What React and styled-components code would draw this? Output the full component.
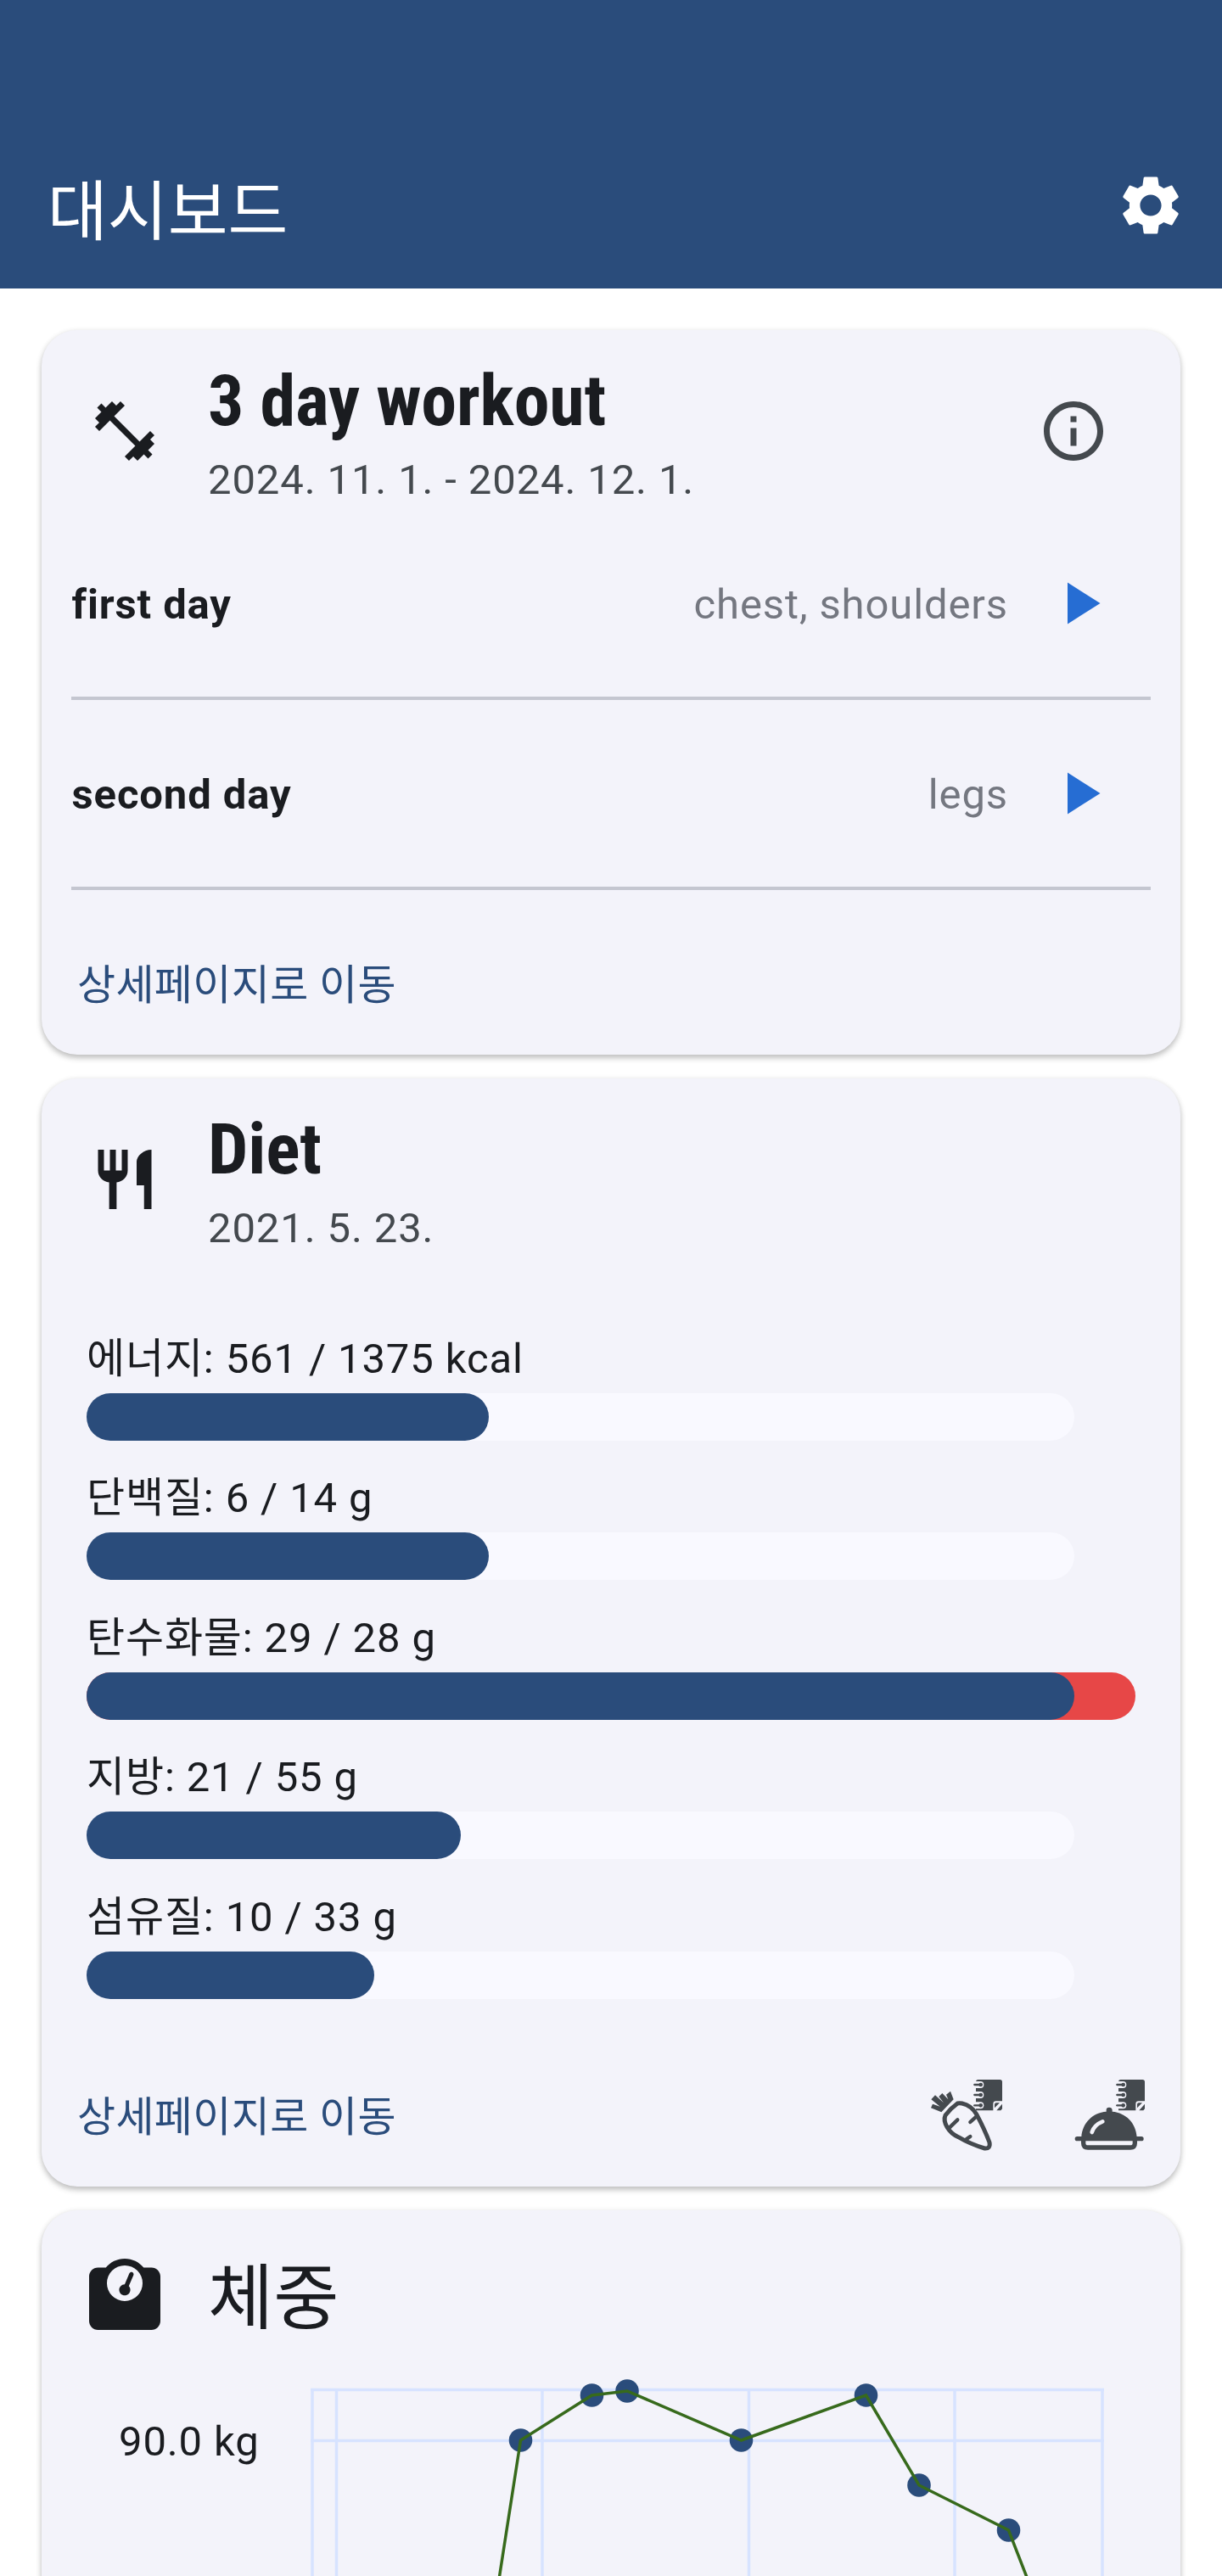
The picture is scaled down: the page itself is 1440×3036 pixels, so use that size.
import React from "react";
import styled, { createGlobalStyle } from "styled-components";
import { MdFitnessCenter, MdInfoOutline, MdPlayArrow, MdRestaurant, MdSettings } from "react-icons/md";
import { FaWeightScale } from "react-icons/fa6";

const color = {
  primary: "#2a4c7b",
  action: "#266dd3",
  surplus: "#e74747",
  card: "#f3f3fa",
  track: "#f9f9ff",
  text: "#1a1c20",
  muted: "#44494e",
  faint: "#747780",
  divider: "#c4c6d0",
  grid: "#d7e3ff",
  line: "#376a1c",
};

const GlobalStyle = createGlobalStyle`
  * { box-sizing: border-box; }
  body {
    margin: 0;
    background: #fff;
    color: ${color.text};
    font-family: Roboto, "Noto Sans CJK KR", sans-serif;
  }
`;

const Screen = styled.div`
  width: 1440px;
  height: 3036px;
  overflow: hidden;
  display: flex;
  flex-direction: column;
`;

const AppBar = styled.header`
  flex: none;
  height: 340px;
  padding: 144px 42px 0 56px;
  background: ${color.primary};
  color: #fff;
  display: flex;
  align-items: center;
  justify-content: space-between;
  svg { display: block; }
`;

const AppTitle = styled.h1`
  margin: 0;
  padding-top: 17px;
  font-size: 77px;
  line-height: 98px;
  font-weight: 400;
`;

const Content = styled.main`
  flex: none;
  padding: 49px 49px 0;
  display: flex;
  flex-direction: column;
  gap: 28px;
`;

const Card = styled.section`
  flex: none;
  height: ${(p) => p.$height}px;
  border-radius: 42px;
  background: ${color.card};
  box-shadow: 0 4px 7px rgba(0, 0, 0, 0.22), 0 1px 7px rgba(0, 0, 0, 0.08);
  display: flex;
  flex-direction: column;
`;

const CardHeader = styled.div`
  flex: none;
  height: ${(p) => p.$height || 238}px;
  padding: 0 84px 0 56px;
  display: flex;
  align-items: center;
  gap: 56px;
  svg { display: block; flex: none; }
`;

const HeaderText = styled.div`
  flex: 1;
  padding-top: 3px;
`;

const CardTitle = styled.h2`
  margin: 0;
  padding-top: ${(p) => (p.$bold ? 0 : 12)}px;
  font-size: 84px;
  line-height: 112px;
  font-weight: ${(p) => (p.$bold ? 700 : 400)};
  ${(p) => p.$bold && `font-family: "Roboto Condensed", Roboto, sans-serif; font-stretch: 75%; letter-spacing: -0.15px;`}
`;

const Subtitle = styled.div`
  font-size: 49px;
  line-height: 73px;
  letter-spacing: 0.875px;
  color: ${color.muted};
`;

const DayRow = styled.div`
  height: 168px;
  padding: 3px 77px 0 35.5px;
  display: flex;
  align-items: center;
  font-size: 49px;
  line-height: 70px;
  letter-spacing: 0.875px;
  svg { display: block; margin: -3px 0 0 42px; color: ${color.action}; }
`;

const DayName = styled.span`
  flex: 1;
  font-weight: 700;
`;

const Muscles = styled.span`
  color: ${color.faint};
`;

const Divider = styled.div`
  height: 56px;
  padding: 26px 35px;
  &::before {
    content: "";
    display: block;
    height: 4px;
    background: ${color.divider};
  }
`;

const Actions = styled.div`
  flex: none;
  height: 168px;
  margin-top: auto;
  padding-left: 42px;
  display: flex;
  align-items: center;
`;

const DetailLink = styled.span`
  flex: 1;
  padding-top: 6px;
  font-size: 49px;
  line-height: 70px;
  letter-spacing: 0.35px;
  color: ${color.primary};
`;

const IconButton = styled.span`
  width: 168px;
  display: flex;
  justify-content: center;
  color: ${color.muted};
  svg { display: block; }
`;

const Nutrients = styled.div`
  padding: 57.5px 53px 0;
`;

const Nutrient = styled.div`
  height: 164.6px;
`;

const NutrientLabel = styled.div`
  font-size: 49px;
  line-height: 70px;
  letter-spacing: 0.875px;
  margin-bottom: 5px;
`;

const Gauge = styled.div`
  display: grid;
  height: 56px;
`;

const Bar = styled.div`
  grid-area: 1 / 1;
  width: ${(p) => p.$width}px;
  border-radius: 28px;
  background: ${(p) => p.$fill};
`;

const WeightChart = styled.div`
  display: flex;
  padding: 12px 0 0 91px;
  svg { display: block; margin-left: 63px; overflow: visible; }
`;

const AxisLabel = styled.div`
  width: 163px;
  flex: none;
  padding-top: 28px;
  font-size: 49px;
  line-height: 70px;
  letter-spacing: 0.875px;
  text-align: right;
  white-space: nowrap;
`;

const Notebook = ({ x }) => (
  <g transform={`translate(${x} 93)`}>
    <path fill="currentColor" d="M17 0H94Q102 0 102 8V76H80Q70 76 70 86V109H9V8Q9 0 17 0Z" />
    {[18, 54, 91].map((y) => (
      <g key={y} strokeLinecap="round">
        <path d={`M7 ${y}H25`} stroke={color.card} strokeWidth="24" />
        <path d={`M4 ${y}H28`} stroke="currentColor" strokeWidth="7" />
        <circle cx="26" cy={y} r="7" fill="currentColor" />
      </g>
    ))}
    <path fill="currentColor" d="M75 100V88Q75 82 81 82H93ZM82 109L102 86V103L97 109Z" />
  </g>
);

const IngredientLogIcon = () => (
  <svg width="84" height="84" viewBox="111 93 252 252" fill="none">
    <Notebook x={261} />
    <path
      fill="currentColor"
      d="M148 208L111 193L117 179L143 188L112 163L126 148L156 175L139 153L151 141L172 163L165 146L180 134L191 163Z"
    />
    <path
      fill={color.card}
      stroke="currentColor"
      strokeWidth="15"
      strokeLinejoin="round"
      d="M205 177Q212 175 221 177Q255 185 272 215Q302 272 318 315Q322 338 301 336Q250 321 208 296C172 280 152 242 162 219Q180 195 205 177Z"
    />
    <path
      stroke="currentColor"
      strokeWidth="13"
      strokeLinecap="round"
      d="M174 265L205 235M250 243L272 223M236 304L250 294"
    />
  </svg>
);

const MealLogIcon = () => (
  <svg width="84" height="84" viewBox="615 93 252 252" fill="none">
    <Notebook x={765} />
    <path
      fill="currentColor"
      d="M643 296C646 246 683 209 731 206V200Q731 191 741 191T752 200V206C800 210 836 246 839 296Z"
    />
    <path stroke="currentColor" strokeWidth="16" strokeLinecap="round" d="M628 302H855" />
    <path
      stroke="currentColor"
      strokeWidth="16"
      d="M650 302V317Q650 333 666 333H816Q832 333 832 317V302"
    />
    <path stroke={color.card} strokeWidth="14" strokeLinecap="round" d="M680 279Q688 253 718 241" />
  </svg>
);

const days = [
  { name: "first day", muscles: "chest, shoulders" },
  { name: "second day", muscles: "legs" },
];

const nutrients = [
  { label: "에너지: 561 / 1375 kcal", width: 474 },
  { label: "단백질: 6 / 14 g", width: 474 },
  { label: "탄수화물: 29 / 28 g", width: 1164, surplus: 1236 },
  { label: "지방: 21 / 55 g", width: 441 },
  { label: "섬유질: 10 / 33 g", width: 339 },
];

const points = [
  [613.5, 2876],
  [697.5, 2823],
  [739, 2818],
  [873.5, 2876],
  [1020.5, 2823],
  [1083, 2929],
  [1188.5, 2982],
];

const Chart = () => (
  <svg width="935" height="221" viewBox="366 2815 935 221">
    <g stroke={color.grid} strokeWidth="3.5">
      {[368, 396.5, 639, 882.5, 1125, 1299].map((x) => (
        <line key={x} x1={x} x2={x} y1="2815" y2="3040" />
      ))}
      {[2816.5, 2876.5].map((y) => (
        <line key={y} x1="366" x2="1301" y1={y} y2={y} />
      ))}
    </g>
    {points.map(([x, y]) => (
      <circle key={x} cx={x} cy={y} r="13.8" fill={color.primary} />
    ))}
    <polyline
      fill="none"
      stroke={color.line}
      strokeWidth="3.5"
      points={[[588, 3040], ...points, [1211, 3040]].join(" ")}
    />
  </svg>
);

export default function App() {
  return (
    <>
      <GlobalStyle />
      <Screen>
        <AppBar>
          <AppTitle>대시보드</AppTitle>
          <MdSettings size={84} />
        </AppBar>
        <Content>
          <Card $height={854}>
            <CardHeader>
              <MdFitnessCenter size={84} />
              <HeaderText>
                <CardTitle $bold>3 day workout</CardTitle>
                <Subtitle>2024. 11. 1. - 2024. 12. 1.</Subtitle>
              </HeaderText>
              <MdInfoOutline size={84} color={color.muted} />
            </CardHeader>
            {days.map((day) => (
              <React.Fragment key={day.name}>
                <DayRow>
                  <DayName>{day.name}</DayName>
                  <Muscles>{day.muscles}</Muscles>
                  <MdPlayArrow size={84} />
                </DayRow>
                <Divider />
              </React.Fragment>
            ))}
            <Actions>
              <DetailLink>상세페이지로 이동</DetailLink>
            </Actions>
          </Card>

          <Card $height={1306}>
            <CardHeader>
              <MdRestaurant size={84} />
              <HeaderText>
                <CardTitle $bold>Diet</CardTitle>
                <Subtitle>2021. 5. 23.</Subtitle>
              </HeaderText>
            </CardHeader>
            <Nutrients>
              {nutrients.map((n) => (
                <Nutrient key={n.label}>
                  <NutrientLabel>{n.label}</NutrientLabel>
                  <Gauge>
                    <Bar $width={1164} $fill={color.track} />
                    {n.surplus && <Bar $width={n.surplus} $fill={color.surplus} />}
                    <Bar $width={n.width} $fill={color.primary} />
                  </Gauge>
                </Nutrient>
              ))}
            </Nutrients>
            <Actions>
              <DetailLink>상세페이지로 이동</DetailLink>
              <IconButton>
                <IngredientLogIcon />
              </IconButton>
              <IconButton>
                <MealLogIcon />
              </IconButton>
            </Actions>
          </Card>

          <Card $height={900}>
            <CardHeader $height={198}>
              <FaWeightScale size={84} />
              <CardTitle>체중</CardTitle>
            </CardHeader>
            <WeightChart>
              <AxisLabel>90.0 kg</AxisLabel>
              <Chart />
            </WeightChart>
          </Card>
        </Content>
      </Screen>
    </>
  );
}
